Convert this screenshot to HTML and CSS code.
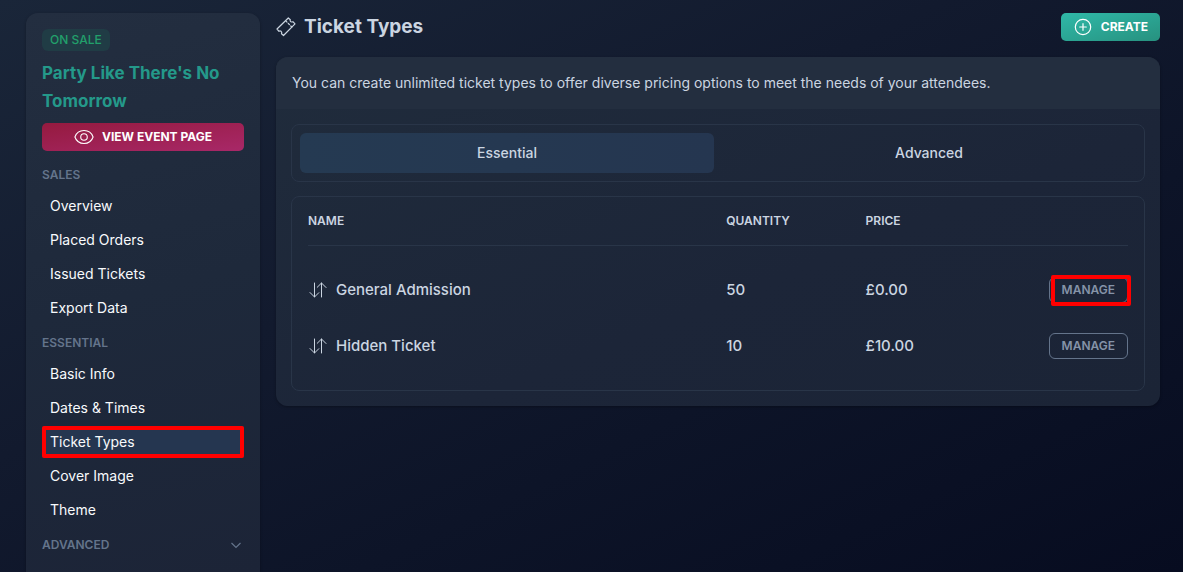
FILE: index.html
```html
<!DOCTYPE html>
<html lang="en">

<head>
  <meta charset="UTF-8">
  <meta name="viewport" content="width=device-width, initial-scale=1.0">
  <title>Ticket Types</title>
  <link rel="stylesheet" href="styles.css">
</head>

<body>
  <div class="page">
    <aside class="sidebar">
      <span class="badge">On Sale</span>
      <h2 class="event-name">Party Like There's No Tomorrow</h2>
      <a href="#" class="btn btn-view">
        <svg class="icon" viewBox="1 1.300 22 22"><path d="M2 12.300C3.400 8.200 7.400 5.200 12 5.200s8.600 3 10 7.100c-1.400 4.100-5.400 7.100-10 7.100s-8.600-3-10-7.100z"/><circle cx="12" cy="12.300" r="3.600"/></svg>
        View Event Page
      </a>

      <nav class="menu">
        <h3 class="menu-title">Sales</h3>
        <a href="#">Overview</a>
        <a href="#">Placed Orders</a>
        <a href="#">Issued Tickets</a>
        <a href="#">Export Data</a>
        <h3 class="menu-title">Essential</h3>
        <a href="#">Basic Info</a>
        <a href="#">Dates &amp; Times</a>
        <a href="#" class="active">Ticket Types</a>
        <a href="#">Cover Image</a>
        <a href="#">Theme</a>
        <button type="button" class="menu-title menu-toggle">
          Advanced
          <svg class="chevron" viewBox="0 0 16 16"><path d="M3.500 6l4.500 4.500L12.500 6"/></svg>
        </button>
      </nav>
    </aside>

    <main class="content">
      <header class="content-header">
        <svg class="icon" viewBox="0 0 20 20"><path d="M1 12L12.300 1l2 1.800c-.5 1 .2 2.200 1.300 2.200.5 0 .900-.1 1.300-.3L19 6.800 7.500 18.500l-2-1.700c.5-1.100.2-2-.500-2.500-.7-.5-1.400-.4-2 0z"/><path d="M10 4.200l1 1M12.300 6.500l1.200 1.200M14.800 9l1 1"/></svg>
        <h1>Ticket Types</h1>
        <button type="button" class="btn btn-create">
          <svg class="icon" viewBox="0 0 20 20"><circle cx="10" cy="10" r="7.700"/><path d="M10 6.700v6.600M6.700 10h6.600"/></svg>
          Create
        </button>
      </header>

      <section class="card">
        <p class="card-intro">You can create unlimited ticket types to offer diverse pricing options to meet the needs of your attendees.</p>
        <div class="card-body">
          <div class="tabs" role="tablist">
            <button type="button" class="tab selected" role="tab" aria-selected="true">Essential</button>
            <button type="button" class="tab" role="tab" aria-selected="false">Advanced</button>
          </div>

          <div class="table-box">
            <table>
              <thead>
                <tr>
                  <th class="col-name">Name</th>
                  <th class="col-quantity">Quantity</th>
                  <th>Price</th>
                  <th></th>
                </tr>
              </thead>
              <tbody>
                <tr>
                  <td>
                    <div class="ticket">
                      <svg class="icon" viewBox="0 0 20 20"><path d="M6.500 3v14M2 12.500L6.500 17l4.300-4.300M13.500 17V3M9.200 7.300L13.500 3 18 7.500"/></svg>
                      General Admission
                    </div>
                  </td>
                  <td>50</td>
                  <td>£0.00</td>
                  <td class="actions"><button type="button" class="btn-manage highlighted">Manage</button></td>
                </tr>
                <tr>
                  <td>
                    <div class="ticket">
                      <svg class="icon" viewBox="0 0 20 20"><path d="M6.500 3v14M2 12.500L6.500 17l4.300-4.300M13.500 17V3M9.200 7.300L13.500 3 18 7.500"/></svg>
                      Hidden Ticket
                    </div>
                  </td>
                  <td>10</td>
                  <td>£10.00</td>
                  <td class="actions"><button type="button" class="btn-manage">Manage</button></td>
                </tr>
              </tbody>
            </table>
          </div>
        </div>
      </section>
    </main>
  </div>
</body>

</html>
```

FILE: styles.css
```css
* {
  margin: 0;
  padding: 0;
  box-sizing: border-box;
}

body {
  font-family: Inter, sans-serif;
  font-size: 14px;
  line-height: 20px;
  color: #cbd5e1;
  background: linear-gradient(to bottom right, #1a2639, #121a2e 40%, #0d1428 65%, #070c20);
  min-height: 100vh;
}

a {
  text-decoration: none;
}

button {
  font-family: inherit;
  cursor: pointer;
}

.page {
  display: flex;
  gap: 16px;
  min-height: 100vh;
  padding: 13px 23px 0 26px;
}

.icon {
  width: 20px;
  height: 20px;
  flex: none;
  fill: none;
  stroke: currentColor;
  stroke-width: 1.2;
  stroke-linecap: round;
  stroke-linejoin: round;
}

/* Sidebar */
.sidebar {
  flex: none;
  width: 234px;
  padding: 16px 16px 0;
  border-radius: 12px 12px 0 0;
  background: linear-gradient(165deg, #232e40, #1e293b 50%, #1c2437);
  box-shadow: 0 1px 3px rgba(0, 0, 0, 0.3);
}

.badge {
  display: block;
  width: fit-content;
  padding: 3px 8px;
  border-radius: 6px;
  background: #203c45;
  color: #22a06b;
  font-size: 12px;
  line-height: 16px;
  font-weight: 500;
  text-transform: uppercase;
}

.event-name {
  margin: 8px 0;
  color: #24998a;
  font-size: 17px;
  line-height: 28px;
  font-weight: 700;
}

.btn {
  display: flex;
  align-items: center;
  justify-content: center;
  gap: 8px;
  height: 28px;
  border: none;
  border-radius: 5px;
  color: white;
  font-size: 12px;
  line-height: 16px;
  font-weight: 700;
  text-transform: uppercase;
}

.btn-view {
  background: linear-gradient(to bottom right, #951a3f, #a82868);
}

.menu {
  display: flex;
  flex-direction: column;
  gap: 2px;
  padding-top: 7px;
}

.menu a {
  padding: 6px 8px;
  border-radius: 2px;
  color: #f8fafc;
}

.menu .active {
  background: #253650;
  box-shadow: inset 0 0 0 4px #ff0000;
}

.menu-title {
  padding: 7px 0 3px;
  color: #64748b;
  font-size: 12px;
  line-height: 20px;
  font-weight: 600;
  text-transform: uppercase;
}

.menu-toggle {
  display: flex;
  align-items: center;
  justify-content: space-between;
  border: none;
  background: none;
}

.chevron {
  width: 16px;
  height: 16px;
  fill: none;
  stroke: currentColor;
  stroke-width: 1.2;
}

/* Main content */
.content {
  flex: 1;
}

.content-header {
  display: flex;
  align-items: center;
  gap: 8px;
  margin-bottom: 16px;
}

.content-header h1 {
  font-size: 19px;
  line-height: 28px;
  font-weight: 700;
}

.btn-create {
  margin-left: auto;
  padding: 0 12px;
  background: linear-gradient(to bottom right, #2fb9a8, #27917f);
}

.card {
  border-radius: 12px;
  overflow: hidden;
  background: linear-gradient(to bottom right, #202c3c, #1c2538 60%, #1b2436);
  box-shadow: 0 1px 3px rgba(0, 0, 0, 0.3);
}

.card-intro {
  padding: 16px;
  background: #232e3f;
}

.card-body {
  display: flex;
  flex-direction: column;
  gap: 14px;
  padding: 15px;
}

.tabs {
  display: grid;
  grid-template-columns: 1fr 1fr;
  gap: 8px;
  padding: 8px;
  border: 1px solid #293548;
  border-radius: 8px;
}

.tab {
  height: 40px;
  border: none;
  border-radius: 6px;
  background: none;
  color: #cbd5e1;
  font-size: 14px;
  line-height: 20px;
  font-weight: 500;
}

.tab.selected {
  background: linear-gradient(to right, #253a52, #253650);
}

.table-box {
  padding: 0 16px 16px;
  border: 1px solid #293548;
  border-radius: 8px;
}

table {
  width: 100%;
  border-collapse: separate;
  border-spacing: 0;
}

th {
  padding: 16px 0;
  border-bottom: 1px solid #293548;
  font-size: 12px;
  line-height: 16px;
  font-weight: 600;
  text-align: left;
  text-transform: uppercase;
}

.col-name {
  width: 51%;
}

.col-quantity {
  width: 17%;
}

tbody::before {
  content: "";
  display: block;
  height: 16px;
}

td {
  height: 56px;
  font-size: 15px;
  line-height: 24px;
  font-weight: 500;
  vertical-align: middle;
}

.ticket {
  display: flex;
  align-items: center;
  gap: 8px;
}

.ticket .icon {
  stroke-width: 1;
}

.actions {
  text-align: right;
}

.btn-manage {
  position: relative;
  height: 26px;
  padding: 0 12px;
  border: 1px solid #64748b;
  border-radius: 6px;
  background: none;
  color: #8593a8;
  font-size: 12px;
  line-height: 16px;
  font-weight: 600;
  text-transform: uppercase;
  vertical-align: middle;
}

.highlighted::after {
  content: "";
  position: absolute;
  inset: -3px -4px -4px 1px;
  border: 4px solid #ff0000;
  border-radius: 2px;
}
```
